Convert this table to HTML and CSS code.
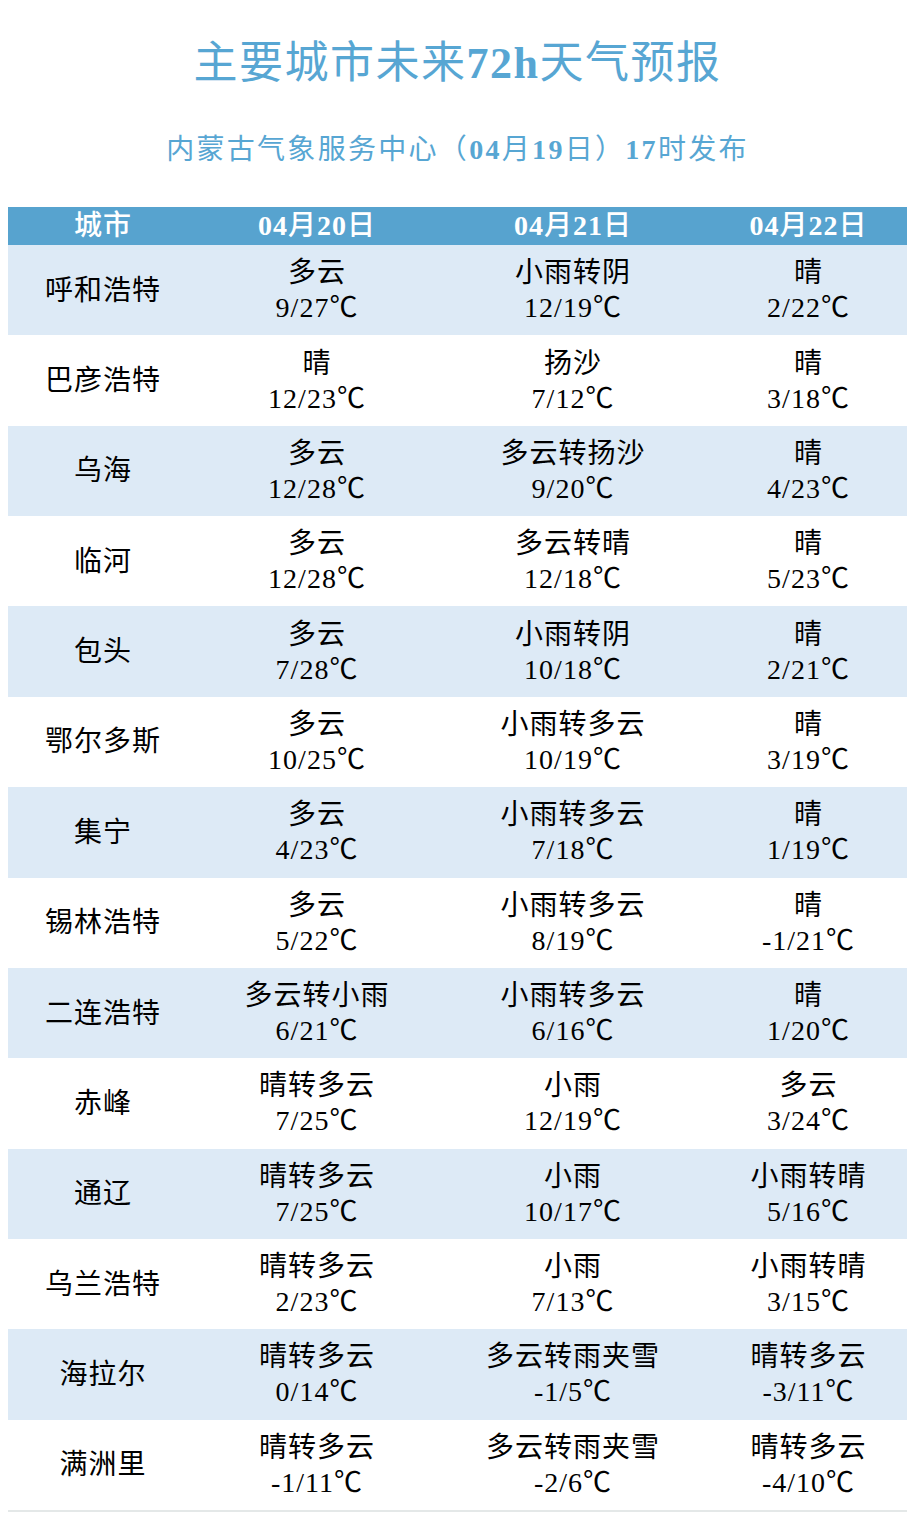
FILE: index.html
```html
<!DOCTYPE html>
<html lang="zh-CN">
<head>
<meta charset="utf-8">
<title>主要城市未来72h天气预报</title>
<link rel="stylesheet" href="styles.css">
</head>
<body>
<div class="page">
  <h1 class="title">主要城市未来<span class="num">72h</span>天气预报</h1>
  <p class="subtitle">内蒙古气象服务中心（<span class="num">04</span>月<span class="num">19</span>日）<span class="num">17</span>时发布</p>
  <div class="table">
    <div class="row head">
      <div class="cell">城市</div>
      <div class="cell"><span class="num">04</span>月<span class="num">20</span>日</div>
      <div class="cell"><span class="num">04</span>月<span class="num">21</span>日</div>
      <div class="cell"><span class="num">04</span>月<span class="num">22</span>日</div>
    </div>
    <div class="row odd"><div class="cell city">呼和浩特</div><div class="cell">多云<br>9/27℃</div><div class="cell">小雨转阴<br>12/19℃</div><div class="cell">晴<br>2/22℃</div></div>
    <div class="row"><div class="cell city">巴彦浩特</div><div class="cell">晴<br>12/23℃</div><div class="cell">扬沙<br>7/12℃</div><div class="cell">晴<br>3/18℃</div></div>
    <div class="row odd"><div class="cell city">乌海</div><div class="cell">多云<br>12/28℃</div><div class="cell">多云转扬沙<br>9/20℃</div><div class="cell">晴<br>4/23℃</div></div>
    <div class="row"><div class="cell city">临河</div><div class="cell">多云<br>12/28℃</div><div class="cell">多云转晴<br>12/18℃</div><div class="cell">晴<br>5/23℃</div></div>
    <div class="row odd"><div class="cell city">包头</div><div class="cell">多云<br>7/28℃</div><div class="cell">小雨转阴<br>10/18℃</div><div class="cell">晴<br>2/21℃</div></div>
    <div class="row"><div class="cell city">鄂尔多斯</div><div class="cell">多云<br>10/25℃</div><div class="cell">小雨转多云<br>10/19℃</div><div class="cell">晴<br>3/19℃</div></div>
    <div class="row odd"><div class="cell city">集宁</div><div class="cell">多云<br>4/23℃</div><div class="cell">小雨转多云<br>7/18℃</div><div class="cell">晴<br>1/19℃</div></div>
    <div class="row"><div class="cell city">锡林浩特</div><div class="cell">多云<br>5/22℃</div><div class="cell">小雨转多云<br>8/19℃</div><div class="cell">晴<br>-1/21℃</div></div>
    <div class="row odd"><div class="cell city">二连浩特</div><div class="cell">多云转小雨<br>6/21℃</div><div class="cell">小雨转多云<br>6/16℃</div><div class="cell">晴<br>1/20℃</div></div>
    <div class="row"><div class="cell city">赤峰</div><div class="cell">晴转多云<br>7/25℃</div><div class="cell">小雨<br>12/19℃</div><div class="cell">多云<br>3/24℃</div></div>
    <div class="row odd"><div class="cell city">通辽</div><div class="cell">晴转多云<br>7/25℃</div><div class="cell">小雨<br>10/17℃</div><div class="cell">小雨转晴<br>5/16℃</div></div>
    <div class="row"><div class="cell city">乌兰浩特</div><div class="cell">晴转多云<br>2/23℃</div><div class="cell">小雨<br>7/13℃</div><div class="cell">小雨转晴<br>3/15℃</div></div>
    <div class="row odd"><div class="cell city">海拉尔</div><div class="cell">晴转多云<br>0/14℃</div><div class="cell">多云转雨夹雪<br>-1/5℃</div><div class="cell">晴转多云<br>-3/11℃</div></div>
    <div class="row last"><div class="cell city">满洲里</div><div class="cell">晴转多云<br>-1/11℃</div><div class="cell">多云转雨夹雪<br>-2/6℃</div><div class="cell">晴转多云<br>-4/10℃</div></div>
  </div>
</div>
</body>
</html>
```

FILE: styles.css
```css
html, body {
  margin: 0;
  padding: 0;
  background: #ffffff;
}
body {
  font-family: "Liberation Serif", "Noto Sans CJK SC", serif;
  color: #000000;
}
.page {
  padding: 0 8px;
}
.title {
  margin: 0;
  padding-top: 38px;
  height: 52px;
  line-height: 52px;
  text-align: center;
  font-size: 44px;
  font-weight: normal;
  color: #57a6d3;
  letter-spacing: 1.5px;
}
.subtitle {
  margin: 0;
  margin-top: 42px;
  height: 36px;
  line-height: 36px;
  text-align: center;
  font-size: 28px;
  color: #57a6d3;
  letter-spacing: 2.3px;
}
.num {
  font-weight: bold;
}
.table {
  margin-top: 39px;
}
.row {
  display: grid;
  grid-template-columns: 190px 238px 274px 197px;
  height: 90.36px;
  align-items: center;
  text-align: center;
}
.row.odd {
  background: #ddeaf6;
}
.row.last {
  border-bottom: 2px solid #e4e8e8;
}
.row.head {
  height: 38px;
  background: #57a3cf;
  color: #ffffff;
  font-size: 28px;
  font-weight: 500;
  line-height: 38px;
  letter-spacing: 1px;
}
.cell {
  font-size: 28px;
  line-height: 35px;
  letter-spacing: 1px;
}
.head .cell {
  line-height: 38px;
}
```
